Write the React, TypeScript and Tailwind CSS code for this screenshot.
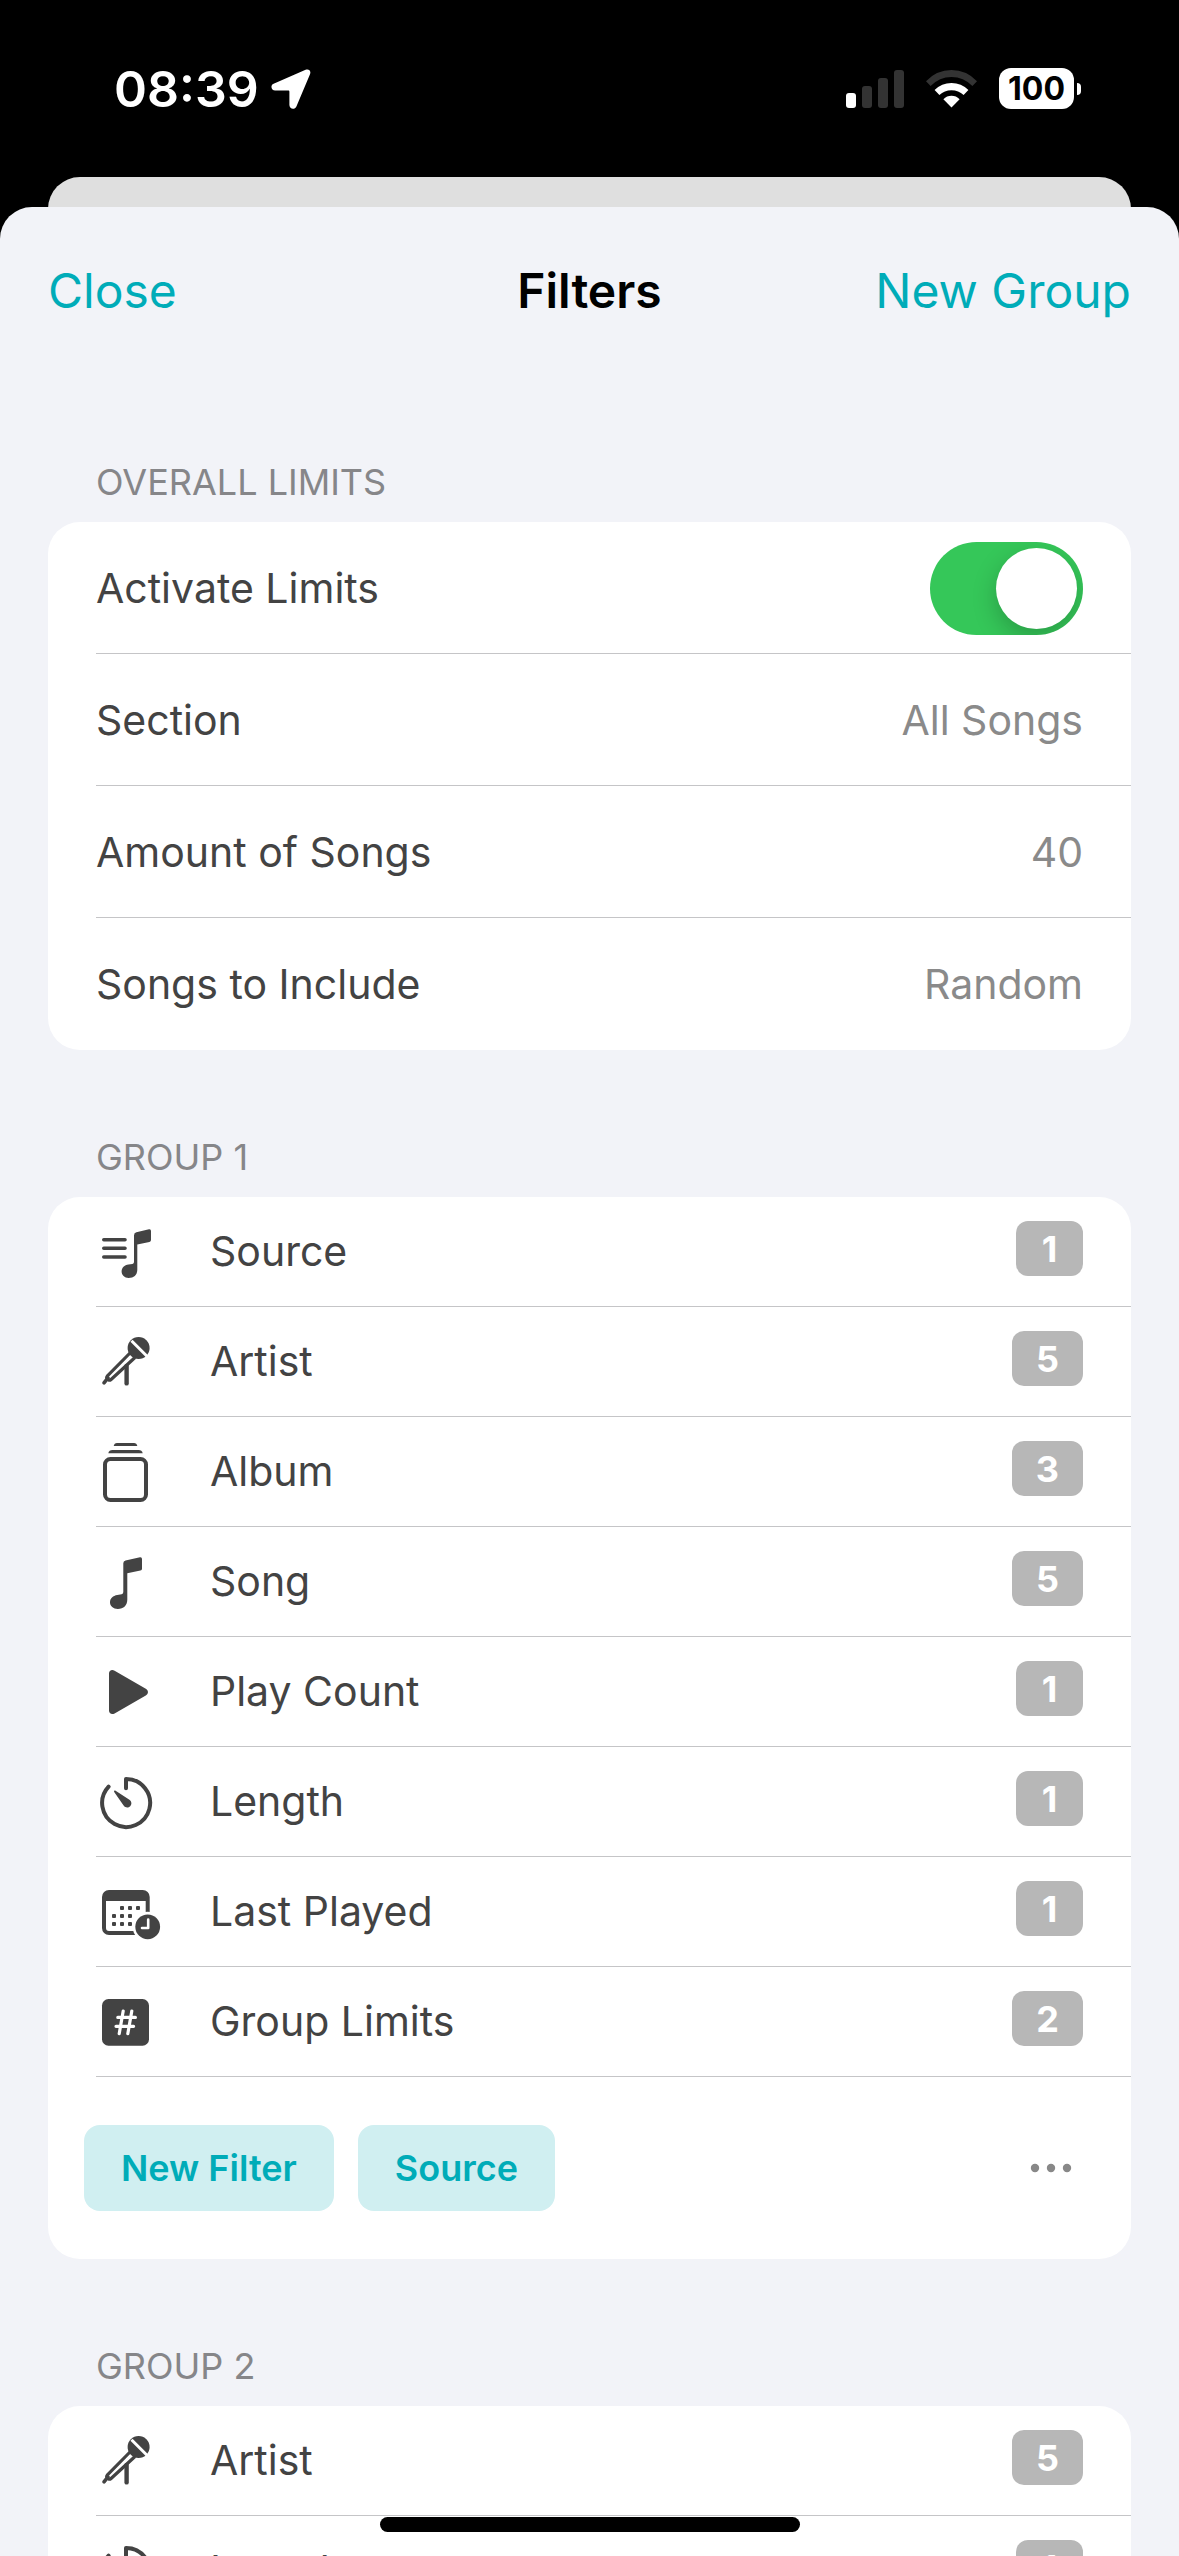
import React, { useState } from "react";

type IconName = "source" | "artist" | "album" | "song" | "play" | "length" | "lastPlayed" | "limits";

type Filter = { icon: IconName; name: string; count: number };

const limits = [
  { name: "Section", value: "All Songs" },
  { name: "Amount of Songs", value: "40" },
  { name: "Songs to Include", value: "Random" },
];

const groupOne: Filter[] = [
  { icon: "source", name: "Source", count: 1 },
  { icon: "artist", name: "Artist", count: 5 },
  { icon: "album", name: "Album", count: 3 },
  { icon: "song", name: "Song", count: 5 },
  { icon: "play", name: "Play Count", count: 1 },
  { icon: "length", name: "Length", count: 1 },
  { icon: "lastPlayed", name: "Last Played", count: 1 },
  { icon: "limits", name: "Group Limits", count: 2 },
];

const groupTwo: Filter[] = [
  { icon: "artist", name: "Artist", count: 5 },
  { icon: "length", name: "Length", count: 1 },
];

// calendar day dots, [x, y]
const days = [
  [26, 26], [34, 26], [42, 26],
  [18, 34], [26, 34], [34, 34],
  [18, 42], [26, 42], [34, 42],
];

const icons: Record<IconName, React.ReactNode> = {
  source: (
    <>
      <path d="M7.8 17.7H29M7.8 26.3H29M7.8 35H29" stroke="currentColor" strokeWidth="3.6" strokeLinecap="round" />
      <path
        d="M38 13.5Q38 10.9 40.4 10.3L53 7.2Q55 6.8 55 9V18Q55 19.6 53.4 19.9L41.3 22.4V47.5C41.3 53 38 56 32.6 56C28.5 56 25.6 53.2 25.6 49.6C25.6 45.8 28.4 43.2 32.5 42.6L36.4 42Q38 41.7 38 40Z"
        fill="currentColor"
      />
    </>
  ),
  artist: (
    <>
      <circle cx="42.6" cy="16" r="11" fill="currentColor" />
      <path d="M35.5 8.8L51 24.2" stroke="#fff" strokeWidth="3" />
      <path
        d="M34 21L11.2 44.2Q10.2 45.4 11.2 46.5L12.4 47.7Q13.6 48.7 14.8 47.7L39 25.5"
        stroke="currentColor"
        strokeWidth="3.2"
        strokeLinejoin="round"
      />
      <path d="M12 45.8L8 50.9" stroke="currentColor" strokeWidth="3.6" strokeLinecap="round" />
      <path d="M30.6 34V51.4" stroke="currentColor" strokeWidth="4.4" strokeLinecap="round" />
    </>
  ),
  album: (
    <>
      <rect x="9" y="17" width="41" height="41" rx="5.5" stroke="currentColor" strokeWidth="4" />
      <path d="M12.3 11.3Q13 8 16.5 8H42.5Q46 8 46.7 11.3Z" fill="currentColor" />
      <path d="M17.7 4Q18.3 1 21 1H38Q40.7 1 41.3 4Z" fill="currentColor" />
    </>
  ),
  song: (
    <path
      d="M27.3 11.3Q27.3 9 29.5 8.5L44 5.2Q46 4.9 46 7V16.8Q46 18.3 44.4 18.6L31.3 21.3V47.5C31.3 53.4 27.6 57 21.8 57C17.3 57 14 54.2 14 50.3C14 46.4 17 43.7 21.3 43L25.6 42.2Q27.3 41.9 27.3 40Z"
      fill="currentColor"
    />
  ),
  play: (
    <path
      d="M13 11.5C13 8.3 16 7.2 18.6 8.7L49.8 26.7C52.7 28.4 52.7 31.8 49.8 33.5L18.6 51.4C16 52.9 13 51.8 13 48.6Z"
      fill="currentColor"
    />
  ),
  length: (
    <>
      <path
        d="M30 16.3V7A24 24 0 1 1 12.6 14.6"
        stroke="currentColor"
        strokeWidth="4"
        strokeLinecap="round"
        strokeLinejoin="round"
      />
      <path
        d="M18.2 20C17.6 19 18.6 18.2 19.6 18.8L33.4 27.8C36 29.8 35.8 32.6 34.2 34.2C32.5 36 29.6 36.2 27.6 33.6Z"
        fill="currentColor"
      />
    </>
  ),
  lastPlayed: (
    <>
      <rect x="8" y="10" width="43.7" height="41" rx="5" stroke="currentColor" strokeWidth="4" />
      <path d="M8 12H51.5V19H8Z" fill="currentColor" />
      {days.map(([x, y]) => (
        <rect key={`${x}-${y}`} x={x - 2} y={y - 2} width="4" height="4" rx="1" fill="currentColor" />
      ))}
      <circle cx="51.7" cy="44.8" r="15" fill="#fff" />
      <circle cx="51.7" cy="44.8" r="12.4" fill="currentColor" />
      <path d="M52.2 37.5V46H46" stroke="#fff" strokeWidth="2.6" strokeLinecap="round" strokeLinejoin="round" />
    </>
  ),
  limits: (
    <>
      <rect x="6" y="7" width="47" height="46.7" rx="6.5" fill="currentColor" />
      <path
        d="M21.8 25.4H39.4M20 34.3H37.6M27.2 19L23.2 41.7M35.8 19L31.8 41.7"
        stroke="#fff"
        strokeWidth="3.2"
        strokeLinecap="round"
      />
    </>
  ),
};

function StatusBar() {
  return (
    <div className="flex h-[177px] shrink-0 items-center justify-between pr-[98px] pl-[114px] text-white">
      <div className="flex items-center gap-3">
        <span className="text-[50px] leading-[60px] font-semibold">08:39</span>
        <svg className="size-10" viewBox="0 0 40 40" fill="currentColor">
          <path d="M34.6.8C37.6-.6 40.4 1.8 39 5.2L25.4 37.4C23.8 41 18.4 40.2 18.4 36V22.8C18.4 22 18 21.6 17.2 21.6H4.2C.2 21.6-1 16.4 2.6 14.8Z" />
        </svg>
      </div>
      <div className="flex items-center">
        <svg className="h-[38px] w-[58px]" viewBox="0 0 58 38">
          <rect x="0" y="23" width="10" height="15" rx="3" fill="#fff" />
          <rect x="16" y="16" width="10" height="22" rx="3" fill="#333" />
          <rect x="32" y="8" width="10" height="30" rx="3" fill="#333" />
          <rect x="48" y="0" width="10" height="38" rx="3" fill="#333" />
        </svg>
        <svg className="ml-[22px] h-[38px] w-[51px]" viewBox="0 0 51 38">
          <path d="M0 11.2Q10.6 0 25.5 0T51 11.2L46.4 16Q37.6 7 25.5 7T4.6 16Z" fill="#333" />
          <path d="M8.6 20Q15.6 13 25.5 13T42.4 20L37.6 25Q32.6 20.2 25.5 20.2T13.4 25Z" fill="#fff" />
          <path d="M17.4 29.2Q20.8 25.8 25.5 25.8T33.6 29.2L25.5 37.6Z" fill="#fff" />
        </svg>
        <div className="ml-[22px] flex items-center gap-[3px]">
          <span className="flex h-[41px] w-[75px] items-center justify-center rounded-xl bg-white text-[32px] leading-10 font-bold text-black">
            100
          </span>
          <span className="h-3 w-1 rounded-r-full bg-white" />
        </div>
      </div>
    </div>
  );
}

function FilterRow({ icon, name, count }: Filter) {
  return (
    <li className="ml-12 h-[110px] border-b border-[#c5c5c7]">
      <button className="flex size-full items-center pr-12 text-left">
        <svg className="size-[60px] shrink-0 overflow-visible" viewBox="0 0 60 60" fill="none">
          {icons[icon]}
        </svg>
        <span className="ml-[54px] flex-1">{name}</span>
        <span className="mb-1.5 flex h-[55px] min-w-[67px] items-center justify-center rounded-xl bg-[#b7b7b7] px-6 text-[36px] font-bold text-white">
          {count}
        </span>
      </button>
    </li>
  );
}

function Section({ title, children }: { title: string; children: React.ReactNode }) {
  return (
    <section>
      <h2 className="flex h-[147px] items-end px-12 pb-4 text-[36px] leading-[48px] text-[#868689]">{title}</h2>
      <div className="overflow-hidden rounded-[32px] bg-white">{children}</div>
    </section>
  );
}

export default function App() {
  const [active, setActive] = useState(true);

  return (
    <div className="relative flex h-screen flex-col overflow-hidden bg-black font-['Inter',sans-serif] text-[41px] text-[#434343]">
      <StatusBar />
      {/* top edge of the screen underneath the sheet */}
      <div className="mx-12 h-[60px] shrink-0 rounded-t-[32px] bg-[#dfdfdf]" />

      <main className="z-10 -mt-[30px] min-h-0 flex-1 overflow-hidden rounded-t-[32px] bg-[#f2f3f8] px-12">
        <header className="grid h-[168px] grid-cols-[1fr_auto_1fr] items-center text-[48px]">
          <button className="justify-self-start text-[#00acb8]">Close</button>
          <h1 className="font-semibold text-black">Filters</h1>
          <button className="justify-self-end text-[#00acb8]">New Group</button>
        </header>

        <Section title="OVERALL LIMITS">
          <div className="ml-12 flex h-[132px] items-center justify-between border-b border-[#c5c5c7] pt-0.5 pr-12">
            <label htmlFor="activate">Activate Limits</label>
            <input
              id="activate"
              type="checkbox"
              role="switch"
              checked={active}
              onChange={(e) => setActive(e.target.checked)}
              className="h-[93px] w-[153px] appearance-none overflow-hidden rounded-full bg-[#e9e9ea] p-1.5 before:block before:size-[81px] before:rounded-full before:bg-white before:shadow-[0_9px_24px_rgba(0,0,0,0.22)] checked:bg-[#35c759] checked:before:ml-[60px]"
            />
          </div>
          <ul>
            {limits.map((row) => (
              <li key={row.name} className="ml-12 h-[132px] border-b border-[#c5c5c7] last:border-b-0">
                <button className="flex size-full items-center justify-between pt-0.5 pr-12 text-left">
                  <span>{row.name}</span>
                  <span className="text-[#8a8a8a]">{row.value}</span>
                </button>
              </li>
            ))}
          </ul>
        </Section>

        <Section title="GROUP 1">
          <ul>
            {groupOne.map((filter) => (
              <FilterRow key={filter.name} {...filter} />
            ))}
          </ul>
          <div className="flex h-[182px] items-center pr-12 pl-9">
            <div className="flex flex-1 gap-6">
              <button className="h-[86px] rounded-2xl bg-[#d0eff1] px-[37px] text-[36px] font-semibold text-[#00acb8]">
                New Filter
              </button>
              <button className="h-[86px] rounded-2xl bg-[#d0eff1] px-[37px] text-[36px] font-semibold text-[#00acb8]">
                Source
              </button>
            </div>
            <button aria-label="More options" className="px-3 py-6">
              <svg className="h-2 w-10 overflow-visible" viewBox="0 0 40 8" fill="#888">
                <circle cx="4" cy="4" r="4.2" />
                <circle cx="20" cy="4" r="4.2" />
                <circle cx="36" cy="4" r="4.2" />
              </svg>
            </button>
          </div>
        </Section>

        <Section title="GROUP 2">
          <ul>
            {groupTwo.map((filter) => (
              <FilterRow key={filter.name} {...filter} />
            ))}
          </ul>
        </Section>
      </main>

      {/* home indicator */}
      <div className="absolute bottom-6 left-1/2 z-20 h-[15px] w-[420px] -translate-x-1/2 rounded-full bg-black" />
    </div>
  );
}
